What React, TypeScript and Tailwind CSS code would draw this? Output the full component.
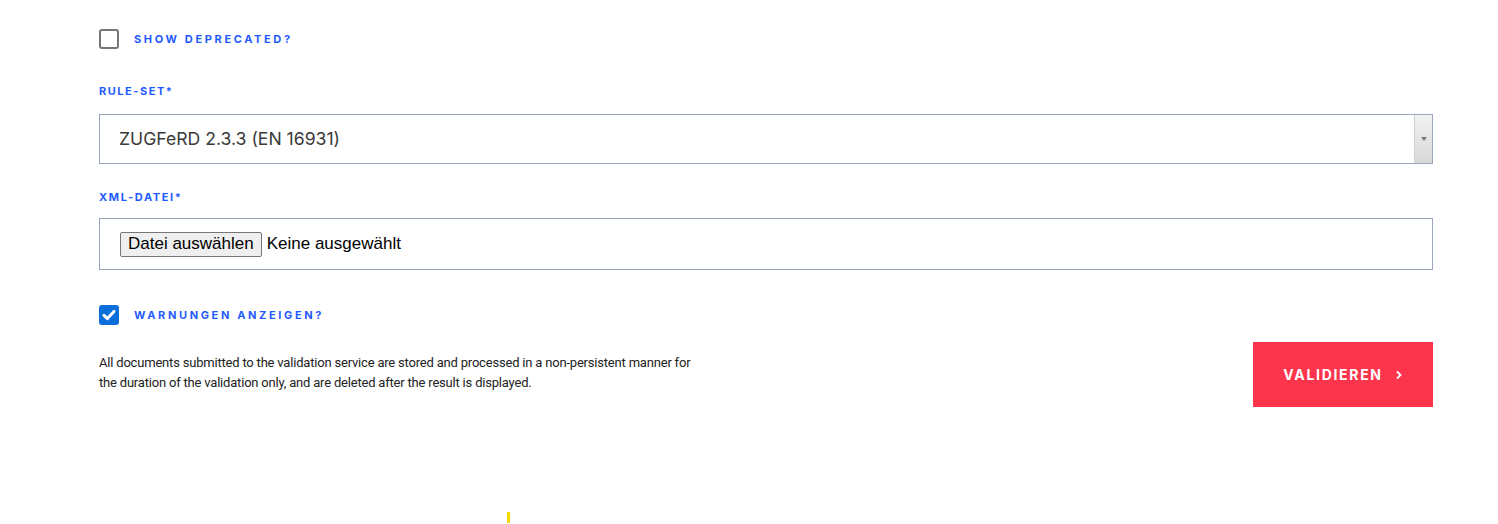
import React from "react";

const labelCls =
  "text-[11px] font-bold tracking-[0.2em] text-[#1f5bff] uppercase [font-family:Inter,'Liberation_Sans',sans-serif]";

export default function App() {
  return (
    <div className="w-[1498px] h-[524px] bg-white relative [font-family:Inter,'Liberation_Sans',sans-serif]">
      <div className="pl-[99px] pr-[65px] pt-[29px]">
        <div className="flex items-center gap-[15px] h-[20px]">
          <span className="w-[20px] h-[20px] rounded-[3px] border-2 border-[#767676] bg-white" />
          <span className={labelCls + " tracking-[0.24em]"}>Show deprecated?</span>
        </div>

        <div className="mt-[35px] h-[14px] flex items-center">
          <span className={labelCls + " text-[10px] tracking-[0.14em]"}>Rule-Set*</span>
        </div>
        <div className="mt-[16px] h-[50px] border border-[#9aa6bf] flex items-stretch">
          <div className="flex-1 flex items-center pl-[19px] text-[17.6px] text-[#3a3a3a]">
            ZUGFeRD 2.3.3 (EN 16931)
          </div>
          <div className="w-[18px] border-l border-[#d0d0d0] bg-gradient-to-b from-[#f2f2f2] to-[#d8d8d8] flex items-center justify-center">
            <span className="block w-0 h-0 border-l-[3px] border-r-[3px] border-t-[4px] border-l-transparent border-r-transparent border-t-[#777]" />
          </div>
        </div>

        <div className="mt-[26px] h-[14px] flex items-center">
          <span className={labelCls + " text-[10px] tracking-[0.15em]"}>XML-Datei*</span>
        </div>
        <div className="mt-[14px] h-[52px] border border-[#9aa6bf] flex items-center pl-[20px]">
          <span className="h-[25px] px-[7px] flex items-center border border-[#767676] rounded-[2px] bg-[#efefef] text-[17px] text-black [font-family:'Liberation_Sans',Arial,sans-serif]">
            Datei auswählen
          </span>
          <span className="ml-[5px] text-[17px] text-black [font-family:'Liberation_Sans',Arial,sans-serif]">
            Keine ausgewählt
          </span>
        </div>

        <div className="mt-[35px] flex items-center gap-[15px] h-[20px]">
          <span className="w-[20px] h-[20px] rounded-[3px] bg-[#0a6fd8] flex items-center justify-center">
            <svg width="16" height="16" viewBox="0 0 16 16">
              <path d="M3 8.4 L6.4 11.6 L13 4.4" fill="none" stroke="white" strokeWidth="3" strokeLinecap="round" strokeLinejoin="round" />
            </svg>
          </span>
          <span className={labelCls + " tracking-[0.24em]"}>Warnungen anzeigen?</span>
        </div>

        <div className="mt-[17px] flex justify-between items-start">
          <p className="mt-[11px] w-[640px] text-[13px] leading-[20px] text-[#222] [font-family:Roboto,sans-serif] tracking-[-0.015em]">
            All documents submitted to the validation service are stored and processed in a non-persistent manner for
            <br />
            the duration of the validation only, and are deleted after the result is displayed.
          </p>
          <button className="w-[180px] h-[65px] bg-[#fc344c] text-white text-[14px] font-bold tracking-[0.12em] flex items-center justify-center gap-[12px]">
            VALIDIEREN
            <svg width="8" height="10" viewBox="0 0 8 10">
              <path d="M2 1.5 L5.5 5 L2 8.5" fill="none" stroke="white" strokeWidth="1.8" />
            </svg>
          </button>
        </div>
      </div>
      <div className="absolute left-[507px] top-[512px] w-[3px] h-[11px] bg-[#f5dc00]" />
    </div>
  );
}
